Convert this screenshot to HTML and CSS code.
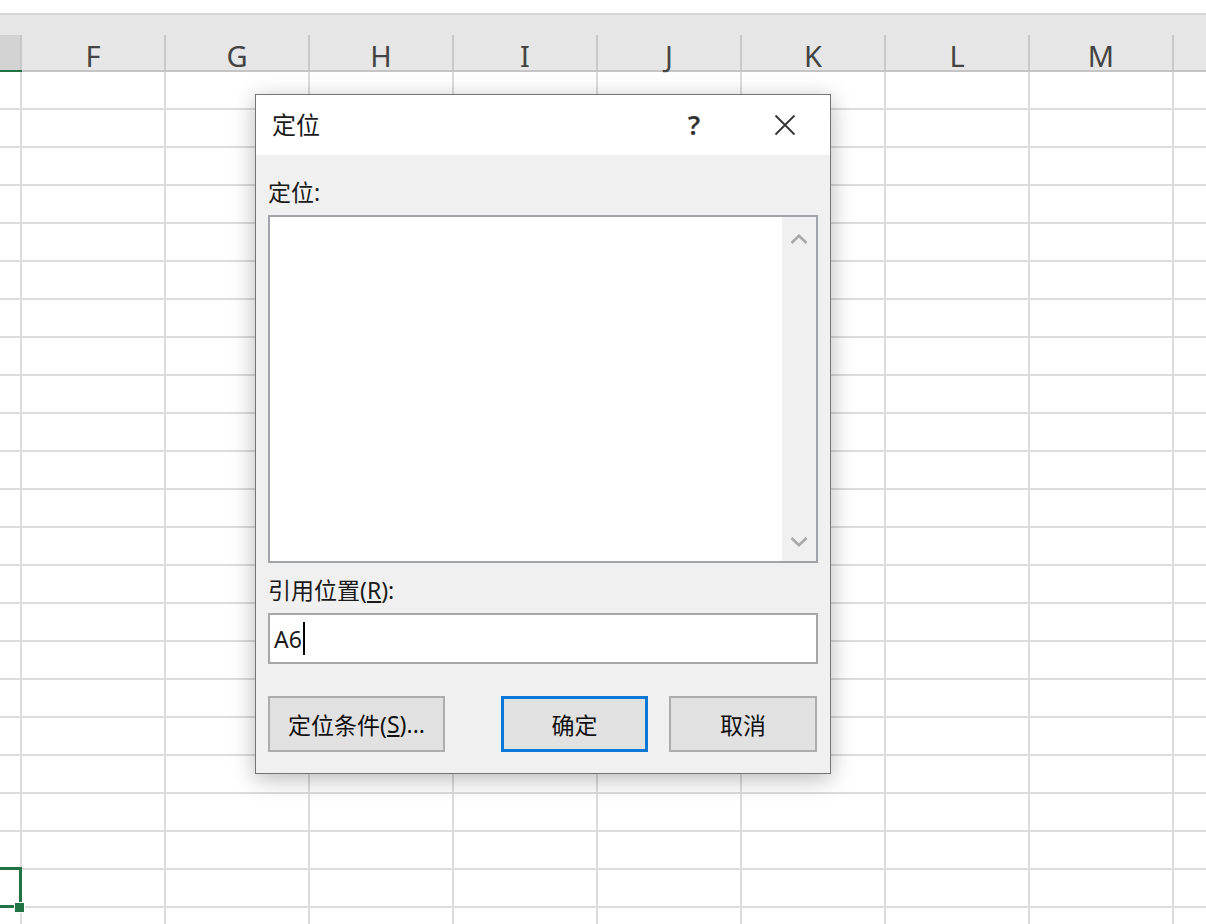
FILE: index.html
```html
<!DOCTYPE html>
<html lang="zh-CN">
<head>
<meta charset="utf-8">
<title>定位</title>
<link rel="stylesheet" href="styles.css">
</head>
<body>
<div class="app">
  <div class="topstrip"></div>
  <div class="colheads">
    <div class="ch corner"></div>
    <div class="ch">F</div>
    <div class="ch">G</div>
    <div class="ch">H</div>
    <div class="ch">I</div>
    <div class="ch">J</div>
    <div class="ch">K</div>
    <div class="ch">L</div>
    <div class="ch">M</div>
    <div class="ch"></div>
  </div>
  <div class="sheet">
    <div class="row"><i></i><i></i><i></i><i></i><i></i><i></i><i></i><i></i><i></i><i></i></div>
    <div class="row"><i></i><i></i><i></i><i></i><i></i><i></i><i></i><i></i><i></i><i></i></div>
    <div class="row"><i></i><i></i><i></i><i></i><i></i><i></i><i></i><i></i><i></i><i></i></div>
    <div class="row"><i></i><i></i><i></i><i></i><i></i><i></i><i></i><i></i><i></i><i></i></div>
    <div class="row"><i></i><i></i><i></i><i></i><i></i><i></i><i></i><i></i><i></i><i></i></div>
    <div class="row"><i></i><i></i><i></i><i></i><i></i><i></i><i></i><i></i><i></i><i></i></div>
    <div class="row"><i></i><i></i><i></i><i></i><i></i><i></i><i></i><i></i><i></i><i></i></div>
    <div class="row"><i></i><i></i><i></i><i></i><i></i><i></i><i></i><i></i><i></i><i></i></div>
    <div class="row"><i></i><i></i><i></i><i></i><i></i><i></i><i></i><i></i><i></i><i></i></div>
    <div class="row"><i></i><i></i><i></i><i></i><i></i><i></i><i></i><i></i><i></i><i></i></div>
    <div class="row"><i></i><i></i><i></i><i></i><i></i><i></i><i></i><i></i><i></i><i></i></div>
    <div class="row"><i></i><i></i><i></i><i></i><i></i><i></i><i></i><i></i><i></i><i></i></div>
    <div class="row"><i></i><i></i><i></i><i></i><i></i><i></i><i></i><i></i><i></i><i></i></div>
    <div class="row"><i></i><i></i><i></i><i></i><i></i><i></i><i></i><i></i><i></i><i></i></div>
    <div class="row"><i></i><i></i><i></i><i></i><i></i><i></i><i></i><i></i><i></i><i></i></div>
    <div class="row"><i></i><i></i><i></i><i></i><i></i><i></i><i></i><i></i><i></i><i></i></div>
    <div class="row"><i></i><i></i><i></i><i></i><i></i><i></i><i></i><i></i><i></i><i></i></div>
    <div class="row"><i></i><i></i><i></i><i></i><i></i><i></i><i></i><i></i><i></i><i></i></div>
    <div class="row"><i></i><i></i><i></i><i></i><i></i><i></i><i></i><i></i><i></i><i></i></div>
    <div class="row"><i></i><i></i><i></i><i></i><i></i><i></i><i></i><i></i><i></i><i></i></div>
    <div class="row"><i></i><i></i><i></i><i></i><i></i><i></i><i></i><i></i><i></i><i></i></div>
    <div class="row"><i class="sel"></i><i></i><i></i><i></i><i></i><i></i><i></i><i></i><i></i><i></i></div>
    <div class="row"><i></i><i></i><i></i><i></i><i></i><i></i><i></i><i></i><i></i><i></i></div>
  </div>

  <div class="dialog">
    <div class="titlebar">
      <span class="title">定位</span>
      <span class="help">?</span>
      <svg class="close" width="22" height="22" viewBox="0 0 22 22"><path d="M1.5 1.5 L20.5 20.5 M20.5 1.5 L1.5 20.5" stroke="#333" stroke-width="1.8" fill="none"/></svg>
    </div>
    <div class="dbody">
      <div class="label">定位:</div>
      <div class="listbox">
        <div class="scroll">
          <div class="sbtn up"><svg width="18" height="10" viewBox="0 0 18 10"><polyline points="1.5,9 9,1.8 16.5,9" stroke="#a8a8a8" stroke-width="2.6" fill="none"/></svg></div>
          <div class="sbtn down"><svg width="18" height="10" viewBox="0 0 18 10"><polyline points="1.5,1 9,8.2 16.5,1" stroke="#a8a8a8" stroke-width="2.6" fill="none"/></svg></div>
        </div>
      </div>
      <div class="label label2">引用位置(<u>R</u>):</div>
      <div class="input"><span class="val">A6</span><span class="caret"></span></div>
      <div class="buttons">
        <div class="btn wide">定位条件(<u>S</u>)...</div>
        <div class="btn ok">确定</div>
        <div class="btn cancel">取消</div>
      </div>
    </div>
  </div>
</div>
</body>
</html>
```

FILE: styles.css
```css
html, body {
  margin: 0;
  padding: 0;
}
body {
  width: 1206px;
  height: 924px;
  overflow: hidden;
  background: #ffffff;
  font-family: "Noto Sans", "Noto Sans CJK SC", sans-serif;
}
.app {
  position: relative;
  width: 1206px;
  height: 924px;
  overflow: hidden;
}
.topstrip {
  height: 13px;
  background: #ffffff;
  border-bottom: 2px solid #d6d6d6;
}
.colheads {
  height: 57px;
  box-sizing: border-box;
  padding-top: 20px;
  background: #e6e6e6;
  border-bottom: 2px solid #c4c4c4;
  display: flex;
  overflow: visible;
}
.ch {
  flex: 0 0 144px;
  box-sizing: border-box;
  border-right: 2px solid #c8c8c8;
  display: flex;
  align-items: center;
  justify-content: center;
  padding-top: 5px;
  font-size: 29px;
  color: #444444;
  font-family: "Noto Sans", sans-serif;
}
.ch.corner {
  flex-basis: 22px;
  background: #d3d3d3;
  position: relative;
}
.ch.corner::after {
  content: "";
  position: absolute;
  left: 0;
  right: -2px;
  bottom: -2px;
  height: 2px;
  background: #217346;
}
.sheet {
  display: flex;
  flex-direction: column;
}
.row {
  display: flex;
  height: 38px;
  flex: 0 0 38px;
}
.row i {
  flex: 0 0 144px;
  box-sizing: border-box;
  border-right: 2px solid #dcdcdc;
  border-bottom: 2px solid #dcdcdc;
}
.row i:first-child {
  flex-basis: 22px;
}
.row i.sel {
  position: relative;
}
.row i.sel::before {
  content: "";
  position: absolute;
  left: -4px;
  top: -3px;
  right: -2px;
  bottom: -2px;
  border: 3px solid #217346;
}
.row i.sel::after {
  content: "";
  position: absolute;
  left: 14px;
  top: 32px;
  width: 9px;
  height: 9px;
  background: #217346;
  border: 1px solid #ffffff;
}

/* dialog */
.dialog {
  position: absolute;
  left: 255px;
  top: 94px;
  width: 576px;
  height: 680px;
  box-sizing: border-box;
  border: 1px solid #747474;
  background: #f0f0f0;
  box-shadow: 0 5px 22px rgba(0, 0, 0, 0.28);
  font-family: "Noto Sans", "Noto Sans CJK SC", sans-serif;
  color: #1a1a1a;
}
.titlebar {
  height: 60px;
  background: #ffffff;
  display: flex;
  align-items: center;
  padding: 0 34px 0 16px;
}
.title {
  flex: 1;
  font-size: 24px;
  line-height: 30px;
}
.help {
  width: 24px;
  text-align: center;
  font-size: 27px;
  font-weight: 600;
  line-height: 30px;
  color: #333333;
  margin-right: 66px;
  position: relative;
  left: -2px;
}
.close {
  display: block;
}
.dbody {
  padding: 23px 12px 0 12px;
}
.label {
  font-size: 23px;
  line-height: 28px;
  height: 28px;
  white-space: nowrap;
}
.label2 {
  margin-top: 13px;
}
.listbox {
  margin-top: 9px;
  height: 348px;
  box-sizing: border-box;
  border: 2px solid #a0a3aa;
  background: #ffffff;
  display: flex;
  justify-content: flex-end;
}
.scroll {
  width: 34px;
  background: #f0f0f0;
  display: flex;
  flex-direction: column;
  justify-content: space-between;
}
.sbtn {
  display: flex;
  align-items: center;
  justify-content: center;
}
.sbtn.up {
  height: 44px;
}
.sbtn.down {
  height: 38px;
}
.sbtn svg {
  display: block;
}
.input {
  margin-top: 9px;
  height: 51px;
  box-sizing: border-box;
  border: 2px solid #a6a6a6;
  background: #ffffff;
  display: flex;
  align-items: center;
  padding-left: 4px;
  font-size: 23px;
  color: #1a1a1a;
}
.caret {
  display: inline-block;
  width: 2px;
  height: 33px;
  background: #000000;
  margin-left: 1px;
}
.buttons {
  margin-top: 32px;
  display: flex;
}
.btn {
  height: 56px;
  box-sizing: border-box;
  border: 2px solid #adadad;
  background: #e1e1e1;
  font-size: 23px;
  color: #111111;
  display: flex;
  align-items: center;
  justify-content: center;
  white-space: nowrap;
}
.btn.wide {
  width: 177px;
}
.btn.ok {
  width: 147px;
  margin-left: auto;
  border: 3px solid #0a78d7;
}
.btn.cancel {
  width: 148px;
  margin-left: 21px;
  margin-right: 1px;
}
```
